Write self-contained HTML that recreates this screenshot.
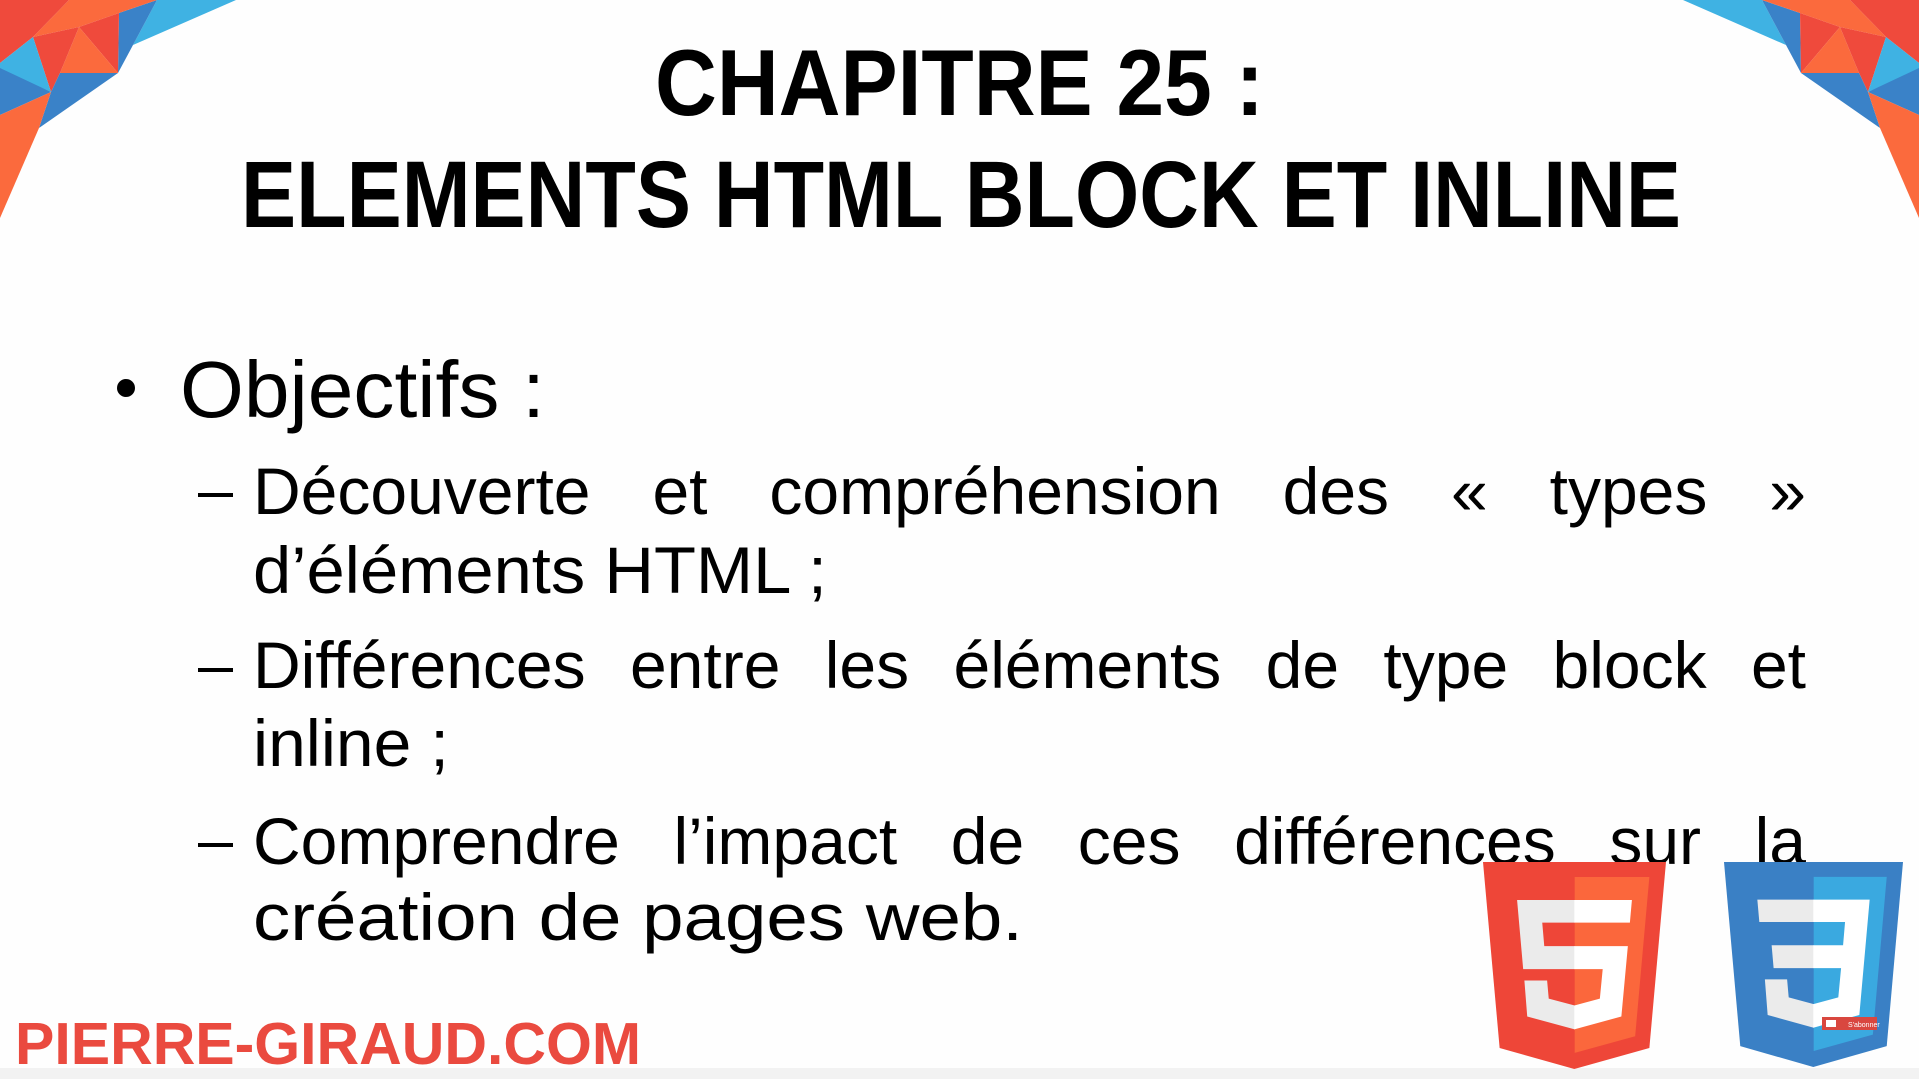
<!DOCTYPE html>
<html><head><meta charset="utf-8"><style>
html,body{margin:0;padding:0;background:#fff;width:1919px;height:1079px;overflow:hidden}
svg{display:block;position:absolute;left:0;top:0}
.j{position:absolute;left:253px;width:1553px;font:66px/66px "Liberation Sans",sans-serif;color:#000;text-align:justify;text-align-last:justify;white-space:nowrap;z-index:1}
</style></head><body>
<svg width="1919" height="1079" viewBox="0 0 1919 1079" xmlns="http://www.w3.org/2000/svg">
<rect width="1919" height="1079" fill="#fefefe"/>
<rect y="1068" width="1919" height="11" fill="#f2f2f2"/>
<defs>
<g id="corner">
<polygon points="1683,0 1762,0 1786,45" fill="#3fb2e3"/>
<polygon points="1762,0 1800,13 1801,73 1786,45" fill="#3a82c8"/>
<polygon points="1762,0 1850,0 1886,37 1840,27 1800,13" fill="#fb6a3d"/>
<polygon points="1800,13 1840,27 1801,73" fill="#ef4a3c"/>
<polygon points="1840,27 1859,73 1801,73" fill="#fb6a3d"/>
<polygon points="1840,27 1886,37 1868,92 1859,73" fill="#ef4a3c"/>
<polygon points="1850,0 1919,0 1919,63 1886,37" fill="#ef4a3c"/>
<polygon points="1886,37 1919,63 1919,70 1868,92" fill="#3fb2e3"/>
<polygon points="1868,92 1919,68 1919,115" fill="#3a82c8"/>
<polygon points="1801,73 1859,73 1868,92 1880,128" fill="#3a82c8"/>
<polygon points="1868,92 1919,115 1919,218 1880,128" fill="#fb6a3d"/>
</g>
</defs>
<use href="#corner"/>
<g transform="translate(1919,0) scale(-1,1)"><use href="#corner"/></g>

<g font-family="Liberation Sans, sans-serif" fill="#000">
<text x="655" y="115" font-size="94" font-weight="bold" textLength="609" lengthAdjust="spacingAndGlyphs">CHAPITRE 25 :</text>
<text x="241" y="227" font-size="95" font-weight="bold" textLength="1440" lengthAdjust="spacingAndGlyphs">ELEMENTS HTML BLOCK ET INLINE</text>
<circle cx="126" cy="388" r="9"/>
<text x="180" y="417" font-size="80" textLength="365" lengthAdjust="spacingAndGlyphs">Objectifs :</text>
<g font-size="66">
<rect x="198" y="493" width="35" height="4"/>
<text x="253" y="593" textLength="574" lengthAdjust="spacingAndGlyphs">d’éléments HTML ;</text>
<rect x="198" y="668" width="35" height="4"/>
<text x="253" y="766" textLength="196" lengthAdjust="spacingAndGlyphs">inline ;</text>
<rect x="198" y="843" width="35" height="4"/>
<text x="253" y="940" textLength="770" lengthAdjust="spacingAndGlyphs">création de pages web.</text>
</g>
<text x="15" y="1064" font-size="59" font-weight="bold" fill="#ea4a3f" textLength="626" lengthAdjust="spacingAndGlyphs">PIERRE-GIRAUD.COM</text>
</g>
</svg>
<div class="j" style="top:458px">Découverte et compréhension des « types »</div>
<div class="j" style="top:632px">Différences entre les éléments de type block et</div>
<div class="j" style="top:808px">Comprendre l’impact de ces différences sur la</div>
<svg width="1919" height="1079" viewBox="0 0 1919 1079" xmlns="http://www.w3.org/2000/svg" style="z-index:2;pointer-events:none">
<svg x="1483" y="862" width="183" height="207" viewBox="30 0 451 512" preserveAspectRatio="none">
<path d="M71,460 L30,0 H481 L440,460 L255,512Z" fill="#ee4638"/>
<path d="M256,472 L405,431 L440,37 H256Z" fill="#fb673c"/>
<path d="M256,208 H181 L176,150 H256 V94 H114 L129,265 H256Z" fill="#ebebeb"/>
<path d="M256,355 L192,338 L188,293 H132 L139,382 L256,414Z" fill="#ebebeb"/>
<path d="M255,208 V265 H325 L318,338 L255,355 V414 L371,382 L387,208Z" fill="#fff"/>
<path d="M255,94 V150 H392 L397,94Z" fill="#fff"/>
</svg>
<svg x="1724" y="862" width="179" height="205" viewBox="30 0 451 512" preserveAspectRatio="none">
<path d="M71,460 L30,0 H481 L440,460 L255,512Z" fill="#3a80c5"/>
<path d="M256,472 L405,431 L440,37 H256Z" fill="#3aa9e0"/>
<path d="M256,94 H114 L119,150 H256Z" fill="#ebebeb"/>
<path d="M256,208 H150 L155,265 H256Z" fill="#ebebeb"/>
<path d="M256,355 L193,338 L189,293 H133 L140,382 L256,414Z" fill="#ebebeb"/>
<path d="M255,94 H397 L371,382 L255,414 V355 L318,338 L325,265 H255 V208 H330 L335,150 H255Z" fill="#fff"/>
</svg>
<rect x="1822" y="1017" width="55" height="13" fill="#d9473f"/>
<text x="1848" y="1027" font-size="7" fill="#fff" font-family="Liberation Sans, sans-serif">S'abonner</text>
<rect x="1826" y="1020" width="10" height="7" fill="#fff"/>
</svg>
</body></html>
